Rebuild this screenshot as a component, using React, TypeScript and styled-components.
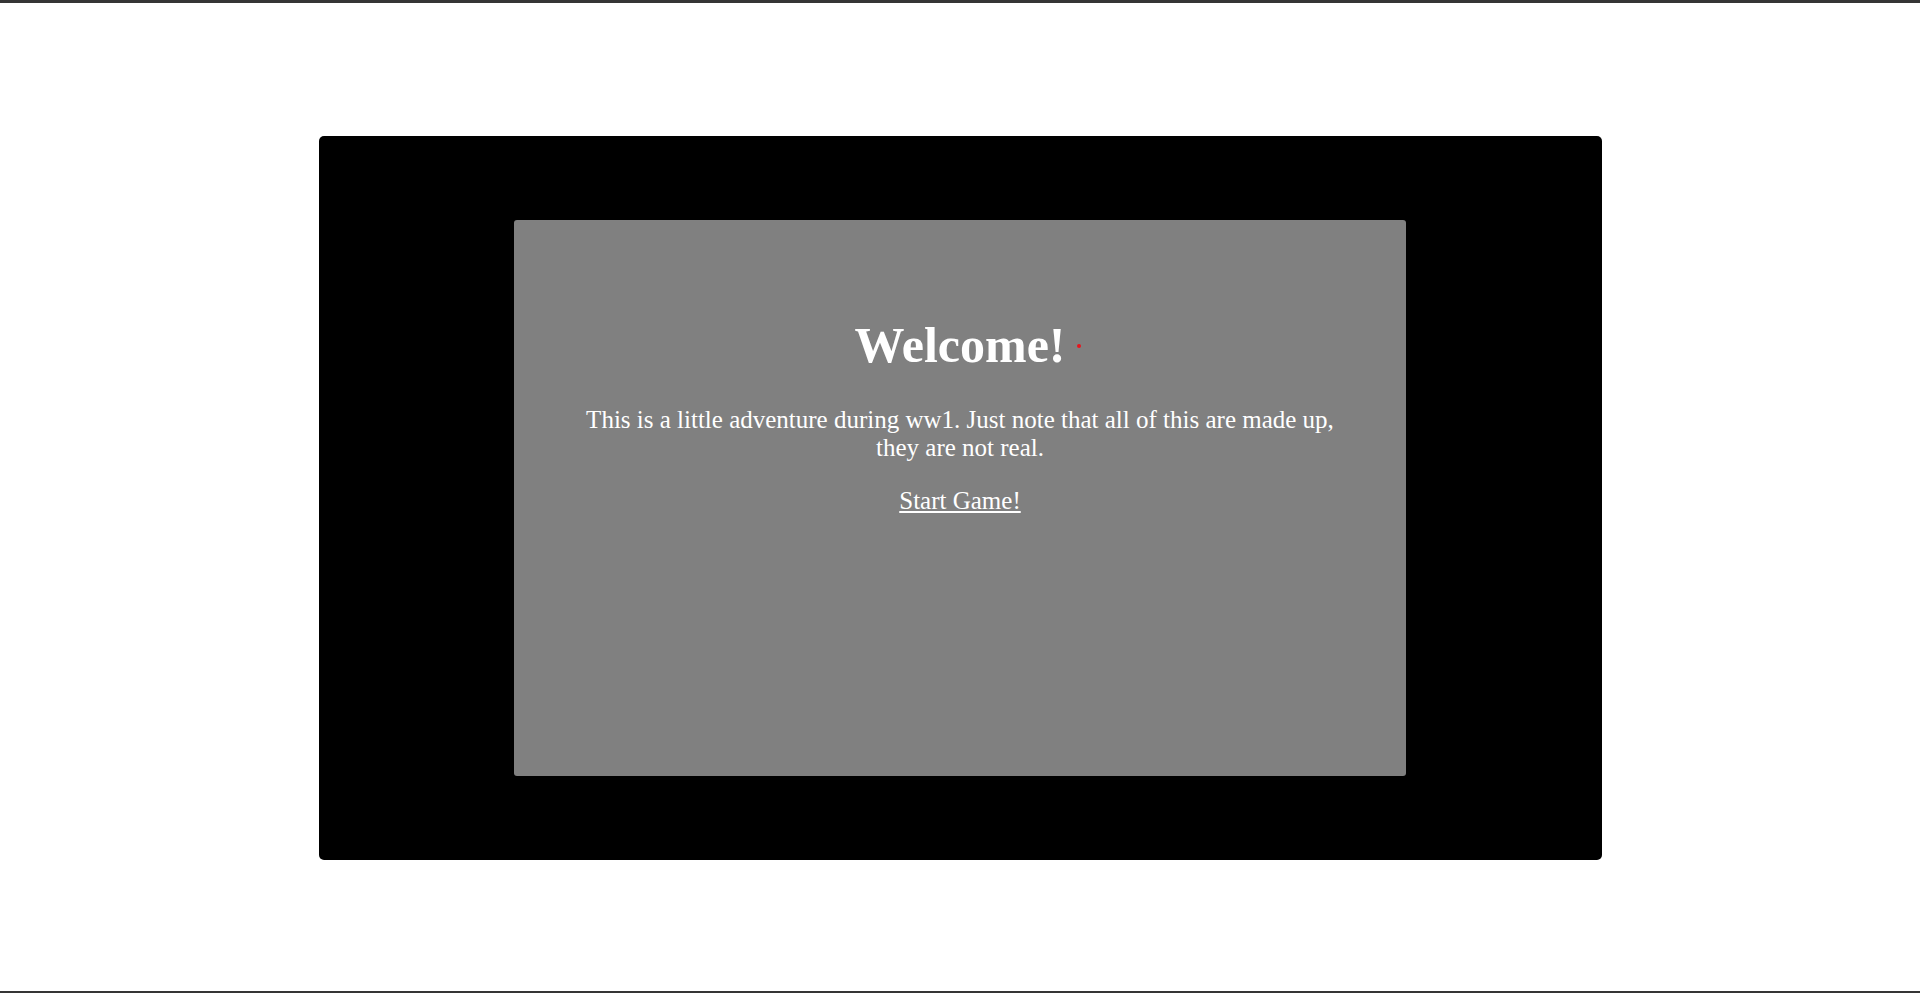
import React from "react";
import styled, { createGlobalStyle } from "styled-components";

const Global = createGlobalStyle`
  html, body { margin: 0; padding: 0; background: #ffffff; }
  body { font-family: "Liberation Serif", "Times New Roman", serif; }
`;

const Page = styled.div`
  box-sizing: border-box;
  height: 993px;
  border-top: 3px solid #353535;
  border-bottom: 2px solid #353535;
  display: flex;
  align-items: center;
  justify-content: center;
`;

const Frame = styled.div`
  width: 1283px;
  height: 724px;
  margin-top: 1px;
  background: #000000;
  border-radius: 5px;
  display: flex;
  align-items: center;
  justify-content: center;
`;

const Panel = styled.div`
  box-sizing: border-box;
  width: 892px;
  height: 556px;
  background: #808080;
  border-radius: 3px;
  padding: 63px 60px 0;
  display: flex;
  flex-direction: column;
  align-items: center;
  text-align: center;
  color: #ffffff;
  font-size: 25px;
`;

const Title = styled.h1`
  margin: 33px 0 32px;
  font-size: 50px;
  font-weight: bold;
  line-height: normal;
`;

const TitleText = styled.span`
  position: relative;
`;

const Dot = styled.span`
  position: absolute;
  left: calc(100% + 11px);
  top: 27px;
  width: 4px;
  height: 4px;
  border-radius: 50%;
  background: #e8141c;
`;

const Text = styled.p`
  margin: 0 0 25px;
  line-height: normal;
`;

const StartLink = styled.a`
  color: #ffffff;
  text-decoration: underline;
  cursor: pointer;
`;

export default function App() {
  return (
    <>
      <Global />
      <Page>
        <Frame>
          <Panel>
            <Title>
              <TitleText>
                Welcome!
                <Dot />
              </TitleText>
            </Title>
            <Text>
              This is a little adventure during ww1. Just note that all of this are made up, they are not real.
            </Text>
            <Text>
              <StartLink href="#">Start Game!</StartLink>
            </Text>
          </Panel>
        </Frame>
      </Page>
    </>
  );
}
